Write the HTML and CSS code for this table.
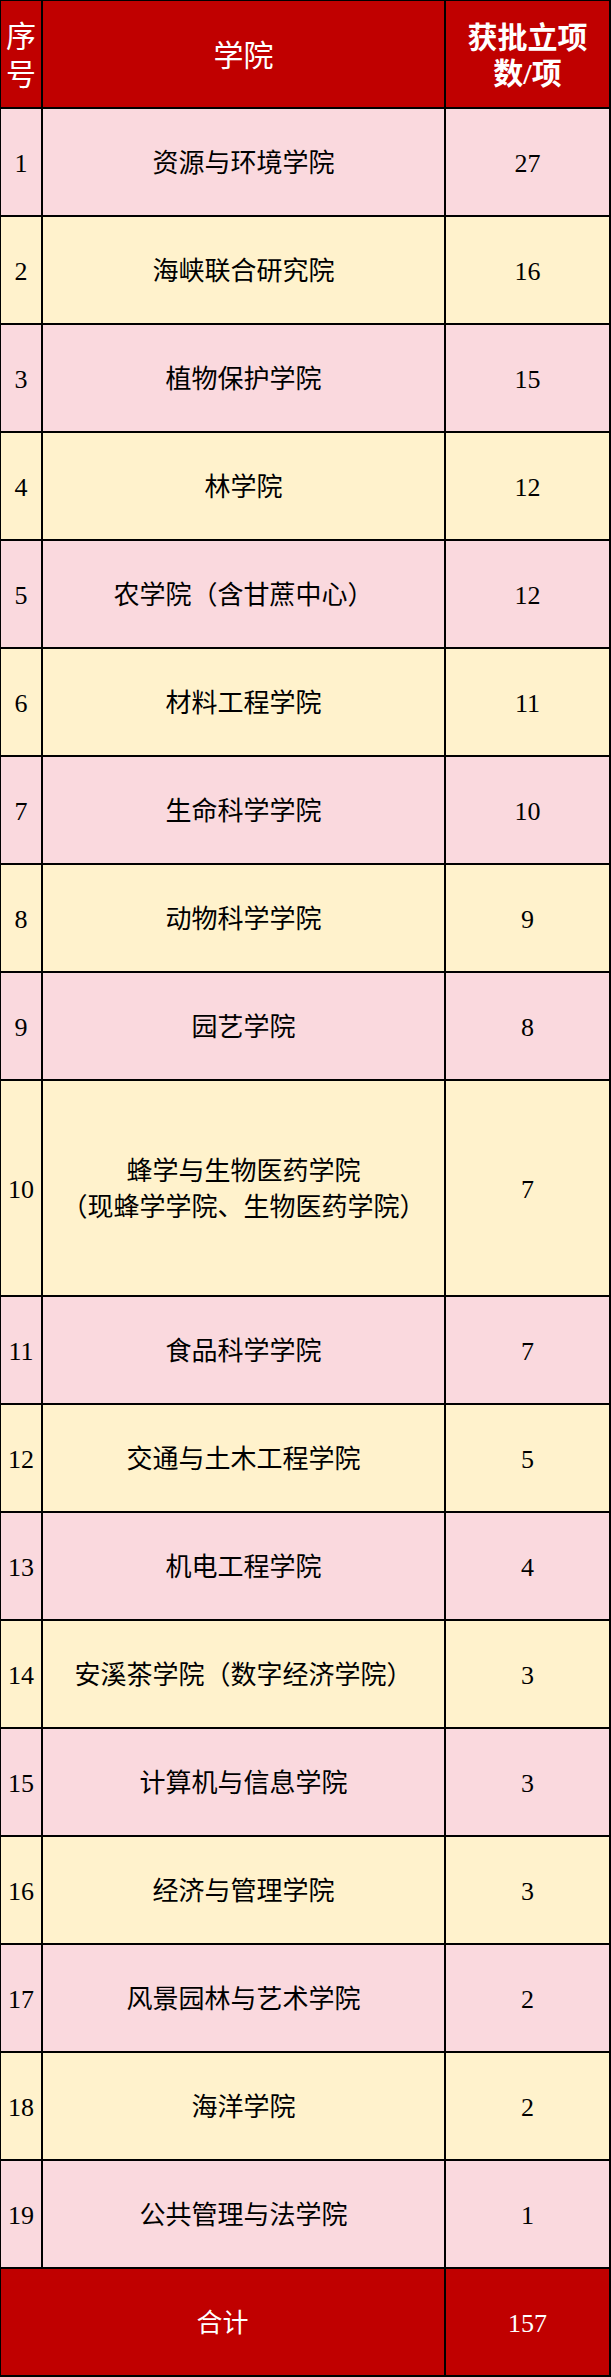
FILE: index.html
```html
<!DOCTYPE html>
<html lang="zh-CN">
<head>
<meta charset="utf-8">
<title>获批立项数</title>
<link rel="stylesheet" href="styles.css">
</head>
<body>
<table class="grant-table">
  <colgroup>
    <col class="col-no">
    <col class="col-name">
    <col class="col-count">
  </colgroup>
  <thead>
    <tr class="head-row">
      <th class="head-no">序<br>号</th>
      <th class="head-name">学院</th>
      <th class="head-count">获批立项<br>数/项</th>
    </tr>
  </thead>
  <tbody>
    <tr class="row-pink"><td>1</td><td>资源与环境学院</td><td>27</td></tr>
    <tr class="row-yellow"><td>2</td><td>海峡联合研究院</td><td>16</td></tr>
    <tr class="row-pink"><td>3</td><td>植物保护学院</td><td>15</td></tr>
    <tr class="row-yellow"><td>4</td><td>林学院</td><td>12</td></tr>
    <tr class="row-pink"><td>5</td><td>农学院（含甘蔗中心）</td><td>12</td></tr>
    <tr class="row-yellow"><td>6</td><td>材料工程学院</td><td>11</td></tr>
    <tr class="row-pink"><td>7</td><td>生命科学学院</td><td>10</td></tr>
    <tr class="row-yellow"><td>8</td><td>动物科学学院</td><td>9</td></tr>
    <tr class="row-pink"><td>9</td><td>园艺学院</td><td>8</td></tr>
    <tr class="row-yellow row-tall"><td>10</td><td>蜂学与生物医药学院<br>（现蜂学学院、生物医药学院）</td><td>7</td></tr>
    <tr class="row-pink"><td>11</td><td>食品科学学院</td><td>7</td></tr>
    <tr class="row-yellow"><td>12</td><td>交通与土木工程学院</td><td>5</td></tr>
    <tr class="row-pink"><td>13</td><td>机电工程学院</td><td>4</td></tr>
    <tr class="row-yellow"><td>14</td><td>安溪茶学院（数字经济学院）</td><td>3</td></tr>
    <tr class="row-pink"><td>15</td><td>计算机与信息学院</td><td>3</td></tr>
    <tr class="row-yellow"><td>16</td><td>经济与管理学院</td><td>3</td></tr>
    <tr class="row-pink"><td>17</td><td>风景园林与艺术学院</td><td>2</td></tr>
    <tr class="row-yellow"><td>18</td><td>海洋学院</td><td>2</td></tr>
    <tr class="row-pink"><td>19</td><td>公共管理与法学院</td><td>1</td></tr>
  </tbody>
  <tfoot>
    <tr class="total-row"><td colspan="2">合计</td><td>157</td></tr>
  </tfoot>
</table>
</body>
</html>
```
FILE: styles.css
```css
html, body {
  margin: 0;
  padding: 0;
  background: #ffffff;
}

.grant-table {
  margin: -1px 0 0 -1px;
  width: 612px;
  table-layout: fixed;
  border-collapse: separate;
  border-spacing: 2px;
  background: #000000;
  font-family: "Liberation Serif", "Noto Sans CJK SC", serif;
  font-size: 26px;
  color: #000000;
}

.col-no { width: 40px; }
.col-name { width: 401px; }
.col-count { width: 163px; }

.grant-table th,
.grant-table td {
  padding: 4px 0 0;
  height: 102px;
  text-align: center;
  vertical-align: middle;
  line-height: 36px;
}

.head-row th {
  background: #c00000;
  color: #ffffff;
  font-weight: normal;
  font-size: 30px;
  line-height: 38px;
}

.head-row .head-count {
  font-weight: bold;
  line-height: 36px;
}

.row-pink td { background: #fad9de; }
.row-yellow td { background: #fff2cc; }

.row-tall td { height: 210px; }

.total-row td {
  background: #c00000;
  color: #ffffff;
}
```
